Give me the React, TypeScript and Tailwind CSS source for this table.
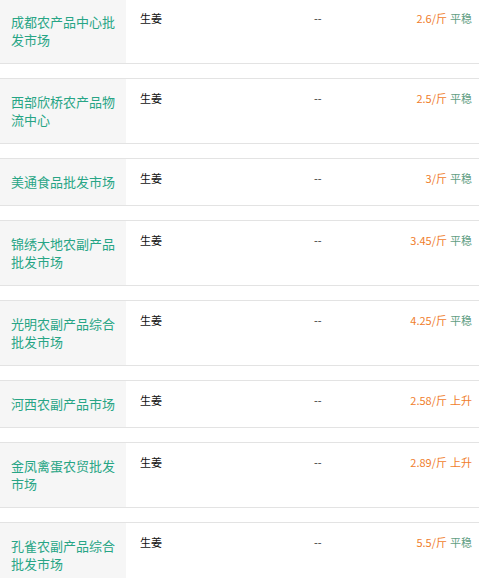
import React from 'react';

type Market = {
  name: string;
  price: string;
  trend: '平稳' | '上升';
};

const markets: Market[] = [
  { name: '成都农产品中心批发市场', price: '2.6', trend: '平稳' },
  { name: '西部欣桥农产品物流中心', price: '2.5', trend: '平稳' },
  { name: '美通食品批发市场', price: '3', trend: '平稳' },
  { name: '锦绣大地农副产品批发市场', price: '3.45', trend: '平稳' },
  { name: '光明农副产品综合批发市场', price: '4.25', trend: '平稳' },
  { name: '河西农副产品市场', price: '2.58', trend: '上升' },
  { name: '金凤禽蛋农贸批发市场', price: '2.89', trend: '上升' },
  { name: '孔雀农副产品综合批发市场', price: '5.5', trend: '平稳' },
];

function MarketItem({ market }: { market: Market }) {
  return (
    <div className="flex border-y border-[#e3e3e3] mb-[14px] bg-white">
      {/* Market name */}
      <div className="w-[126px] shrink-0 bg-[#f6f6f6] pl-[11px] pr-[8px] py-[14px] text-[13px] leading-[18px] text-[#27a585]">
        {market.name}
      </div>
      {/* Details */}
      <div className="flex flex-1 items-start pt-[11px] pl-[14px] pr-[7px] text-[11px] leading-[16px]">
        <span className="w-[174px] shrink-0 text-[#111]">生姜</span>
        <span className="text-[#333]">--</span>
        <span className="flex-1 text-right">
          <span className="text-[#f07d2c]">{market.price}/斤</span>
          <span className={market.trend === '上升' ? 'ml-[3px] text-[#f07d2c]' : 'ml-[3px] text-[#5f9e84]'}>
            {market.trend}
          </span>
        </span>
      </div>
    </div>
  );
}

export default function App() {
  return (
    <div
      className="w-[479px] h-[578px] overflow-hidden bg-white"
      style={{ fontFamily: '"Noto Sans CJK SC", "Noto Sans", sans-serif' }}
    >
      <div className="-mt-[2px]">
        {markets.map((market) => (
          <MarketItem key={market.name} market={market} />
        ))}
      </div>
    </div>
  );
}
